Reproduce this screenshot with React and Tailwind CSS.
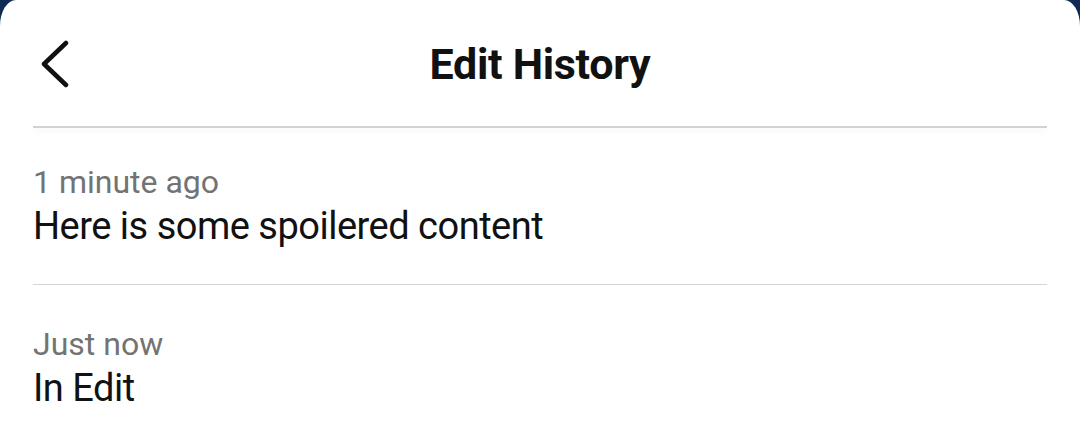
export default function App() {
  const edits = [
    { when: "1 minute ago", text: "Here is some spoilered content" },
    { when: "Just now", text: "In Edit" },
  ];

  return (
    <div className="w-[1080px] h-[445px] overflow-hidden bg-[#0f2a55]" style={{ fontFamily: "Roboto, 'Noto Sans', sans-serif" }}>
      <div className="h-full bg-white rounded-tl-[16px_26px] rounded-tr-[16px_26px]">
        <header className="h-[126px] grid grid-cols-[1fr_auto_1fr] items-center px-[33px]">
          <svg width="40" height="50" viewBox="0 0 40 50" className="ml-[6px] mt-[3px]">
            <path d="M27 3 L5 24 L27 45" fill="none" stroke="#111" strokeWidth="4.5" strokeLinecap="round" strokeLinejoin="round" />
          </svg>
          <h1 className="text-[43px] leading-[50px] font-bold text-[#111] tracking-[-0.3px] mt-[2px]">Edit History</h1>
          <div />
        </header>
        <div className="mx-[33px] h-[2px] bg-[#d2d2d2] shadow-[0_3px_5px_rgba(0,0,0,0.06)]" />
        <ul className="px-[33px]">
          {edits.map((e, i) => (
            <li key={i} className={i === 0 ? "pt-[35px] pb-[36px] border-b border-[#d6d6d6]" : "pt-[40px]"}>
              <div className="text-[32px] leading-[38px] text-[#737373]">{e.when}</div>
              <div className="text-[38px] leading-[44px] tracking-[-0.5px] text-[#111] mt-[3px]">{e.text}</div>
            </li>
          ))}
        </ul>
      </div>
    </div>
  );
}
